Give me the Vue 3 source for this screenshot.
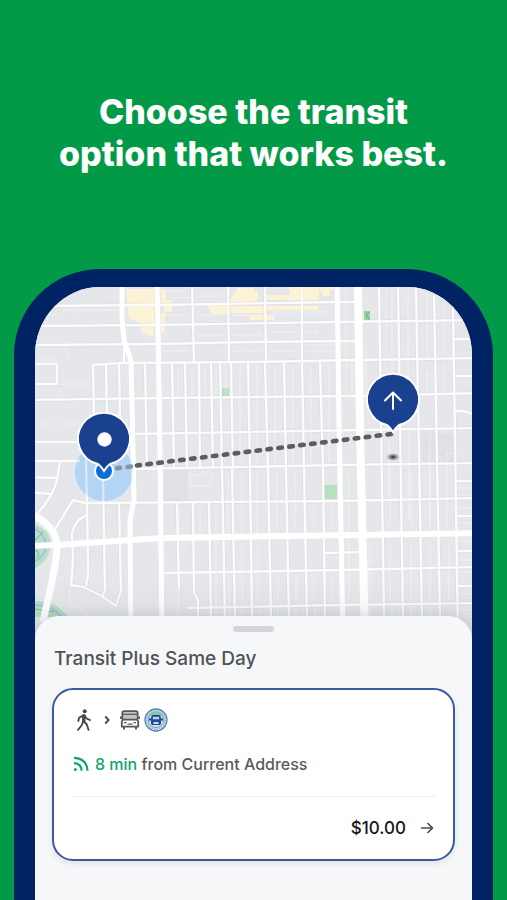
<script setup>
const bigRoads = [
  { d: 'M122 280V318L124 340L131 361L133 450L134 500L130 520L131 640', w: 5 },
  { d: 'M157 280L158 330L160 450L162 640', w: 5 },
  { d: 'M124 340V362', w: 2 },
  { d: 'M337 280L339 420L343 640', w: 5 },
  { d: 'M358 280L360 430L365 640', w: 8 },
  { d: 'M30 546L58 545L130 540L162 538L480 533', w: 6 },
  { d: 'M30 513C48 523 57 532 57 547C56 572 49 592 43 622', w: 7 },
]

const streets = [
  'M30 306L160 305L337 302H360',
  'M30 326L160 325L337 322L480 320',
  'M30 345L160 344L250 342L337 341H360',
  'M92 365L124 363L250 362L360 360L480 358',
  'M30 400L160 398L360 396L480 393',
  'M133 434L360 430L480 428',
  'M135 469L340 465L480 463',
  'M54 531L73 500L85 503L340 501L480 498',
  'M164 573L340 570L480 567',
  'M187 608L340 605L480 603',
  'M192 280L194 362', 'M228 280L229 362', 'M265 280L266 362', 'M302 280L302 362',
  'M379 287L384 620', 'M398 287L403 620', 'M416 287L422 620', 'M434 295L440 620', 'M453 305L458 640',
  'M93 364L94 420', 'M106 364L107 420', 'M119 364L120 420', 'M145 363L147 468',
  'M172 362L174 468', 'M185 362L187 468', 'M199 362L200 468', 'M211 362L213 468',
  'M220 362L222 468', 'M231 362L233 468', 'M248 362L250 468', 'M265 362L268 468',
  'M284 362L286 468', 'M302 362L304 468', 'M320 362L323 468',
  'M177 503L179 590', 'M193 503L194 593L198 600V620', 'M209 503L211 620', 'M222 468L225 620',
  'M232 468L235 620', 'M250 468L252 620', 'M268 468L271 620', 'M286 468L289 620',
  'M304 468L307 620', 'M323 468L325 620',
  'M30 364H57V384H30', 'M30 442H80', 'M30 461H80', 'M60 461L57 480Q53 496 38 513',
  'M30 477L57 478', 'M30 492L50 494',
  'M86 460L88 560V575L86 586', 'M103 480L105 590L102 597', 'M119 503L121 590L116 606L100 595L83 587L71 585L73 560L72 535Q74 519 88 515',
  'M453 339H480', 'M453 376H480', 'M455 411Q464 410 472 414', 'M456 481H480', 'M457 516H480',
  'M457 551H480', 'M458 586H480', 'M324 553L360 552',
]

const alleys = [
  'M40 356V364M43 357V364M46 356V364M49 358V364M53 357V364M64 340L69 359M57 384H92M60 390L57 400',
  'M35 424H52M60 424H80M75 306V315M62 310H120M35 315H60',
  'M165 291H188M168 298H190M196 296H225M164 315H190M196 315H225M232 315H262M232 335H262M196 335H226M165 351H190M232 351H262M270 351H300M305 351H334M270 312H334M271 332H300',
  'M308 326H317V332H306M309 345H334M346 290V400M352 362V395M366 350V395',
  'M178 370V395M192 368V397M205 368V397M216 368V395M226 370V397M240 366V463M257 366V463M275 366V463M293 366V463M311 366V463M329 366V463',
  'M386 290V355M392 292V390M408 290V392M427 292V360M444 304V355M427 365V392M444 365V392M389 440V495M409 434V520M430 434V530M447 460V530',
  'M179 508V534M200 508V534M216 508V570M228 472V534M242 472V534M257 472V534M277 472V530M295 472V530M314 505V530M332 505V530',
  'M242 545V600M258 545V600M278 575V600M296 575V600M314 575V600M332 575V600M349 475V600M370 545V600M390 470V525M411 470V525M430 470V525M390 545V600M411 545V600M430 545V600M449 545V600',
  'M458 488H472M458 495H472M458 508H472M458 523H472M458 541H472M459 560H472M459 572H472M459 594H472M459 610H472',
  'M178 588V620M216 575V620M229 575V620M242 608V620M260 608V620M278 608V620M296 608V620M315 608V620M370 606V620M392 606V620M411 606V620M430 606V620',
  'M189 473L191 486H210L213 477L208 471L202 475H189M428 462V457Q431 454 435 456L441 458V462M447 460V453H454V462M426 375H434M429 381H435M131 598H140M71 586L69 600L72 608Q80 604 87 617M35 591L42 594',
]
</script>

<template>
  <main class="page">
    <h1 class="headline">Choose the transit<br />option that works best.</h1>

    <div class="phone">
      <svg class="map" viewBox="35 287 437 346" role="img" aria-label="Route map">
        <defs>
          <linearGradient id="mapShade" x1="0" y1="0" x2="0" y2="1">
            <stop offset="0" stop-color="#1c2733" stop-opacity="0" />
            <stop offset="1" stop-color="#1c2733" stop-opacity="0.07" />
          </linearGradient>
          <radialGradient id="anchor">
            <stop offset="0" stop-color="#222429" />
            <stop offset="0.3" stop-color="#44464c" stop-opacity="0.8" />
            <stop offset="1" stop-color="#777" stop-opacity="0" />
          </radialGradient>
        </defs>
        <rect x="35" y="287" width="437" height="346" fill="#e6e7ea" />
        <path d="M164 469H188V501H164ZM422 433H456V462H422Z" fill="#dfe1e5" />

        <g fill="#fcf3d6">
          <path d="M126 289H154V335L148 336L140 330L143 324L129 318Z" />
          <path d="M161 290H166V300H172V312H165V332H161V313H164V303H161Z" />
          <path d="M207 305H229V314H212ZM231 298L238 288H254V302H231ZM231 306H265V313H231ZM250 315H274V320H250Z" />
          <path d="M266 295H290V288H319V300H266ZM267 306H318V310H267ZM289 287H334V290H330V296H322V290H289ZM248 291H258V300H248Z" />
        </g>
        <g fill="#b9dfc0">
          <path d="M222 388H229V396H222ZM324 485H337V499H324Z" />
          <path d="M35 524Q49 530 51 543Q49 562 35 568Z" />
          <path d="M35 601Q56 600 68 617H35Z" />
        </g>
        <path d="M364 311H370V320H364Z" fill="#97d0a2" />
        <path d="M369 312L366 315L369 319" fill="none" stroke="#57ad69" />
        <g fill="none" stroke="#a3c0ea" stroke-width="2">
          <path d="M35 529Q45 534 46 546Q44 558 35 561" />
          <path d="M35 605Q53 605 61 617" />
        </g>
        <path d="M35 540L43 532M35 550Q41 552 37 558M35 609L54 612" fill="none" stroke="#7abb7d" />

        <circle cx="104" cy="472" r="29" fill="#bbd8f6" />
        <g fill="none" stroke="#fff" stroke-opacity="0.42" stroke-width="1">
          <path v-for="(d, i) in alleys" :key="i" :d="d" />
        </g>
        <g fill="none" stroke="#1c2733" stroke-opacity="0.035" stroke-width="4">
          <path v-for="(d, i) in streets" :key="i" :d="d" />
        </g>
        <g fill="none" stroke="#fcfcfd" stroke-width="2.4" stroke-linejoin="round">
          <path v-for="(d, i) in streets" :key="i" :d="d" />
        </g>
        <g fill="none" stroke="#fff" stroke-linejoin="round">
          <path v-for="(r, i) in bigRoads" :key="i" :d="r.d" :stroke-width="r.w" />
        </g>
        <rect x="35" y="580" width="437" height="53" fill="url(#mapShade)" />

        <circle cx="104" cy="472" r="29" fill="#a9d0f8" fill-opacity="0.4" />
        <circle cx="104" cy="471" r="9" fill="#0d6bd7" stroke="#fff" stroke-width="2" />
        <path d="M391 434L137 465.500" fill="none" stroke="#5c5d60" stroke-width="4.600" stroke-linecap="round" stroke-dasharray="3.500 7.500" />
        <path d="M131 466.500L117 468.200" fill="none" stroke="#8793a0" stroke-width="4.600" stroke-linecap="round" stroke-dasharray="3.500 7.500" />
        <ellipse cx="393" cy="457" rx="7" ry="4" fill="url(#anchor)" />

        <g fill="#19418f" stroke="#fff" stroke-width="2">
          <path d="M98 464A26 26 0 1 1 110 464Q107 466 104 471Q101 466 98 464Z" />
          <path d="M387 425A26 26 0 1 1 399 425Q396 427 393 432Q390 427 387 425Z" />
        </g>
        <circle cx="104.500" cy="439.500" r="7.200" fill="#fff" />
        <path d="M393 409V393M385 400.500L393 392.500L401 400.500" fill="none" stroke="#fff" stroke-width="2" stroke-linecap="round" stroke-linejoin="round" />
      </svg>

      <section class="sheet">
        <div class="handle"></div>
        <h2 class="title">Transit Plus Same Day</h2>

        <article class="card">
          <div class="modes">
            <svg class="walk" viewBox="0 0 16 22" aria-hidden="true">
              <circle cx="8.700" cy="2.300" r="2" fill="#494b4e" />
              <path d="M7.600 6.300L6.800 13M7.600 6.300L3.200 8.600L2.300 12M8.600 6.300L10.300 9.300L14 11M7 13L5.500 16.500L2 20.800M8 12.500L10.800 15.500L12.500 20.800" fill="none" stroke="#494b4e" stroke-width="1.900" stroke-linecap="round" stroke-linejoin="round" />
              <path d="M6.500 5.500H9L9.500 13H6Z" fill="#494b4e" />
            </svg>
            <svg class="chevron" viewBox="0 0 6 10" aria-hidden="true">
              <path d="M1.200 1.500L4.700 5L1.200 8.500" fill="none" stroke="#494b4e" stroke-width="1.900" />
            </svg>
            <svg class="bus" viewBox="0 0 20 20" aria-hidden="true">
              <path d="M2.300 9.500V3Q2.300 1.200 4.300 1.200H15.700Q17.700 1.200 17.700 3V9.500" fill="#c2c3c5" stroke="#55575a" stroke-width="1.800" />
              <path d="M3 4.300H17" stroke="#55575a" stroke-width="1.200" />
              <path d="M1.800 16.700V11.500L3 9.600H17L18.200 11.500V16.700Z" fill="#fff" stroke="#55575a" stroke-width="1.800" stroke-linejoin="round" />
              <path d="M0.700 6.500V9M19.300 6.500V9M4 17V19.600M16 17V19.600" stroke="#55575a" stroke-width="2" />
              <path d="M4 12.700H6.500M13.500 12.700H16M7.500 14.200H12.500" stroke="#55575a" stroke-width="1.300" />
            </svg>
            <svg class="badge" viewBox="0 0 24 24" role="img" aria-label="Transit agency">
              <circle cx="12" cy="12" r="11" fill="#dce8ef" stroke="#5f80ba" stroke-width="1.300" />
              <circle cx="12" cy="12" r="9.200" fill="none" stroke="#8fb0cc" stroke-width="1.600" stroke-dasharray="1.500 1" />
              <circle cx="12" cy="12" r="7.600" fill="#cdeadb" stroke="#5f86bd" stroke-width="0.800" />
              <path d="M4.500 9Q12 0 19.500 9" fill="none" stroke="#7cc795" stroke-width="2" />
              <path d="M8 7Q12 5.800 16 7L17 9.500V15.500L16 17H8L7 15.500V9.500Z" fill="#21499b" />
              <path d="M8.800 8.800H15.200V11.300H8.800Z" fill="#b4d6ec" />
              <path d="M9.500 14.200H14.500V15.800H9.500Z" fill="#fff" />
              <path d="M5 11.500H7M17 11.500H19" stroke="#21499b" stroke-width="2" />
            </svg>
          </div>

          <p class="eta">
            <svg class="signal" viewBox="0 0 16 16" aria-hidden="true">
              <circle cx="2.300" cy="13.500" r="1.500" fill="#12a56b" />
              <path d="M1 7.200Q8.200 7.500 8.700 14.700M1 1.800Q13.700 2.200 14.500 14.700" fill="none" stroke="#12a56b" stroke-width="2.200" />
            </svg>
            <span><span class="minutes">8 min</span> from Current Address</span>
          </p>

          <div class="fare">
            <span class="price">$10.00</span>
            <button class="go" type="button" aria-label="Select this option">
              <svg viewBox="0 0 14 14" aria-hidden="true">
                <path d="M1 7H12.500M7.500 2L12.500 7L7.500 12" fill="none" stroke="#4c4e51" stroke-width="1.600" />
              </svg>
            </button>
          </div>
        </article>
      </section>
    </div>
  </main>
</template>

<style>
body {
  margin: 0;
  background: #039a47;
}
</style>

<style scoped>
.page {
  box-sizing: border-box;
  height: 100vh;
  min-height: 600px;
  display: flex;
  flex-direction: column;
  overflow: hidden;
  padding: 91px 14px 0;
  background: #039a47;
  font-family: Inter, "Liberation Sans", sans-serif;
}
.headline {
  margin: 0 0 94px;
  color: #fff;
  font-size: 34px;
  line-height: 42px;
  font-weight: 800;
  text-align: center;
}
.phone {
  flex: 1 0 auto;
  display: flex;
  flex-direction: column;
  overflow: hidden;
  border: 21px solid #002364;
  border-top-width: 18px;
  border-bottom: 0;
  border-radius: 86px 86px 0 0;
  background: #e3e5e8;
}
.map {
  display: block;
  width: 100%;
}
.sheet {
  position: relative;
  flex: 1;
  margin-top: -17px;
  padding: 10px 17px 41px;
  border-radius: 24px 24px 0 0;
  background: #f6f7f9;
  box-shadow: 0 -2px 10px rgba(30, 40, 60, 0.1);
}
.handle {
  width: 41px;
  height: 6px;
  margin: 0 auto;
  border-radius: 3px;
  background: #d3d5d8;
}
.title {
  margin: 13px 2px 15px;
  color: #505255;
  font-size: 19px;
  line-height: 28px;
  font-weight: 500;
}
.card {
  padding: 18px;
  border: 2px solid #385a9f;
  border-radius: 21px;
  background: #fff;
  box-shadow: 0 3px 6px rgba(20, 35, 60, 0.09);
}
.modes {
  display: flex;
  align-items: center;
  height: 24px;
  padding-left: 4px;
}
.walk {
  width: 16px;
  height: 22px;
}
.chevron {
  width: 6px;
  height: 10px;
  margin: 0 10px 0 12px;
}
.bus {
  width: 20px;
  height: 20px;
}
.badge {
  width: 24px;
  height: 24px;
  margin-left: 4px;
}
.eta {
  display: flex;
  align-items: center;
  gap: 6px;
  margin: 20px 0;
  padding-left: 1px;
  color: #58595c;
  font-size: 16px;
  line-height: 24px;
  font-weight: 500;
}
.signal {
  width: 16px;
  height: 16px;
}
.minutes {
  color: #12a56b;
}
.fare {
  display: flex;
  align-items: center;
  justify-content: flex-end;
  gap: 13px;
  padding-top: 18px;
  border-top: 1px solid #eceef0;
}
.price {
  color: #151515;
  font-size: 17px;
  line-height: 26px;
  font-weight: 500;
}
.go {
  width: 16px;
  height: 16px;
  padding: 1px;
  border: 0;
  background: none;
  cursor: pointer;
}
.go svg {
  display: block;
  width: 14px;
  height: 14px;
}
</style>
